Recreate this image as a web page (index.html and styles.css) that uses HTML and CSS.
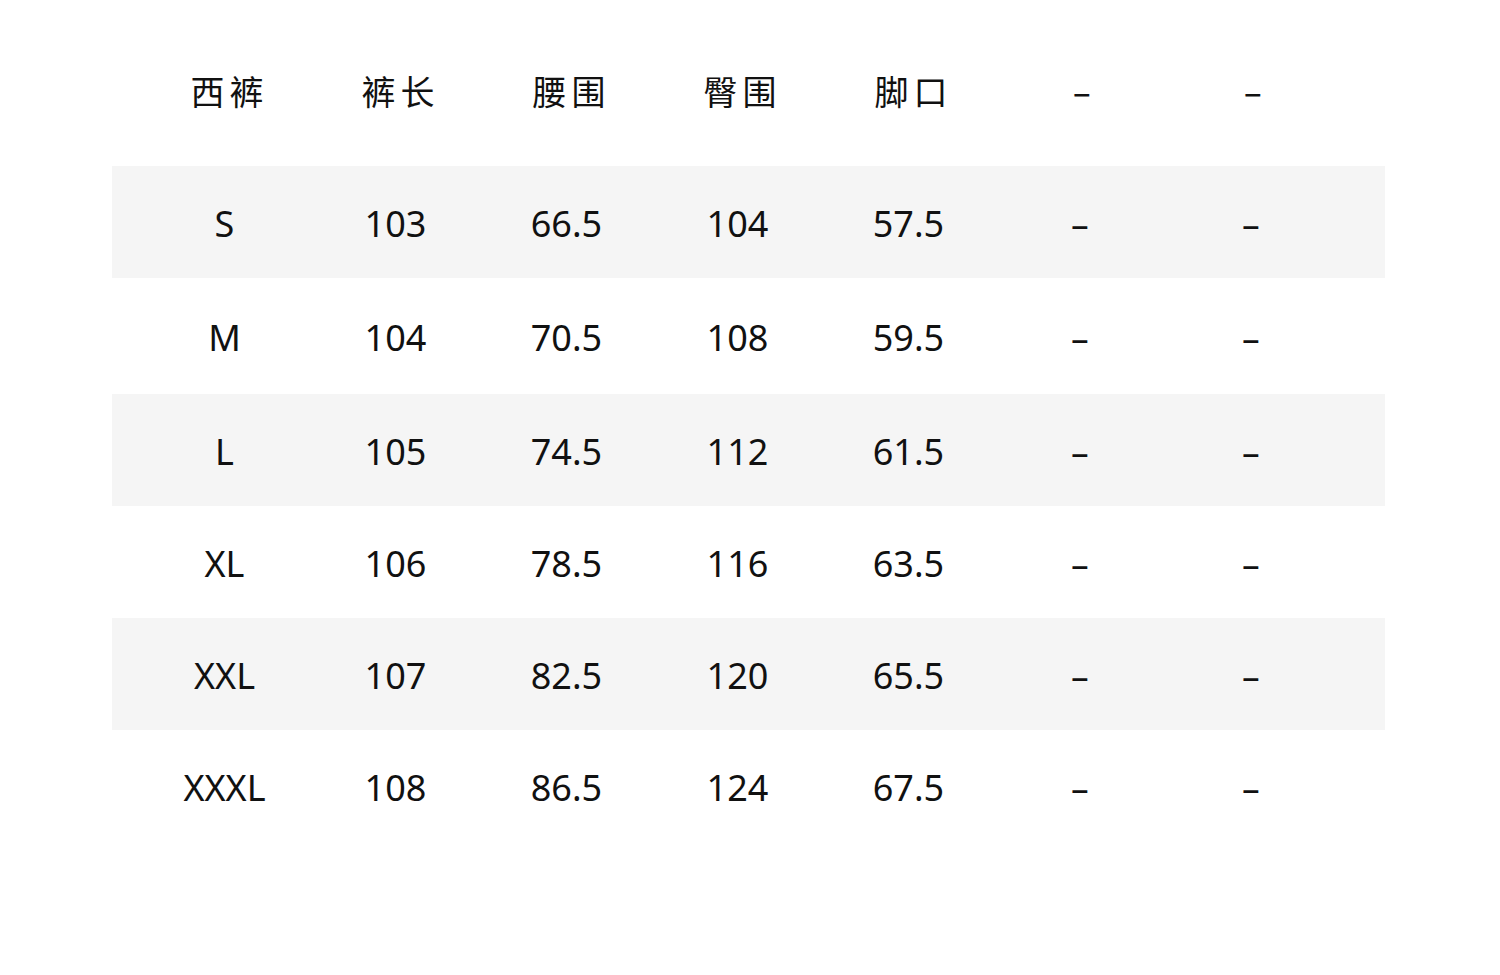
FILE: index.html
```html
<!DOCTYPE html>
<html lang="zh">
<head>
<meta charset="utf-8">
<title>西裤尺码表</title>
<link rel="stylesheet" href="styles.css">
</head>
<body>
<div class="page">
  <div class="table">
    <div class="row head">
      <div class="cell">西裤</div>
      <div class="cell">裤长</div>
      <div class="cell">腰围</div>
      <div class="cell">臀围</div>
      <div class="cell">脚口</div>
      <div class="cell"><span class="dash">-</span></div>
      <div class="cell"><span class="dash">-</span></div>
    </div>
    <div class="row shade">
      <div class="cell">S</div><div class="cell">103</div><div class="cell">66.5</div><div class="cell">104</div><div class="cell">57.5</div><div class="cell"><span class="dash">-</span></div><div class="cell"><span class="dash">-</span></div>
    </div>
    <div class="row tall">
      <div class="cell">M</div><div class="cell">104</div><div class="cell">70.5</div><div class="cell">108</div><div class="cell">59.5</div><div class="cell"><span class="dash">-</span></div><div class="cell"><span class="dash">-</span></div>
    </div>
    <div class="row shade">
      <div class="cell">L</div><div class="cell">105</div><div class="cell">74.5</div><div class="cell">112</div><div class="cell">61.5</div><div class="cell"><span class="dash">-</span></div><div class="cell"><span class="dash">-</span></div>
    </div>
    <div class="row">
      <div class="cell">XL</div><div class="cell">106</div><div class="cell">78.5</div><div class="cell">116</div><div class="cell">63.5</div><div class="cell"><span class="dash">-</span></div><div class="cell"><span class="dash">-</span></div>
    </div>
    <div class="row shade">
      <div class="cell">XXL</div><div class="cell">107</div><div class="cell">82.5</div><div class="cell">120</div><div class="cell">65.5</div><div class="cell"><span class="dash">-</span></div><div class="cell"><span class="dash">-</span></div>
    </div>
    <div class="row">
      <div class="cell">XXXL</div><div class="cell">108</div><div class="cell">86.5</div><div class="cell">124</div><div class="cell">67.5</div><div class="cell"><span class="dash">-</span></div><div class="cell"><span class="dash">-</span></div>
    </div>
  </div>
</div>
</body>
</html>
```
FILE: styles.css
```css
html, body {
  margin: 0;
  padding: 0;
  background: #ffffff;
}

.page {
  width: 1500px;
  height: 975px;
  padding: 34px 115px 0 112px;
  box-sizing: border-box;
}

.table {
  width: 1273px;
  display: flex;
  flex-direction: column;
}

.row {
  display: grid;
  grid-template-columns: repeat(7, 171px);
  padding-left: 27px;
  height: 112px;
  align-items: center;
  font-family: "Noto Sans", "Noto Sans CJK SC", sans-serif;
  font-size: 36px;
  color: #111111;
}

.row.tall {
  height: 116px;
}

.row.shade {
  background: #f5f5f5;
}

.row.head {
  height: 114px;
  margin-bottom: 18px;
  padding-left: 32px;
  font-family: "Noto Sans CJK SC", "Noto Sans", sans-serif;
  font-size: 34px;
  letter-spacing: 5px;
}

.cell {
  text-align: center;
  line-height: 1;
}

.row:not(.head) .cell {
  padding-top: 4px;
}

.dash {
  display: inline-block;
  transform: scaleX(1.7);
  letter-spacing: 0;
}

.row.head .dash {
  margin-left: -6px;
}
```
